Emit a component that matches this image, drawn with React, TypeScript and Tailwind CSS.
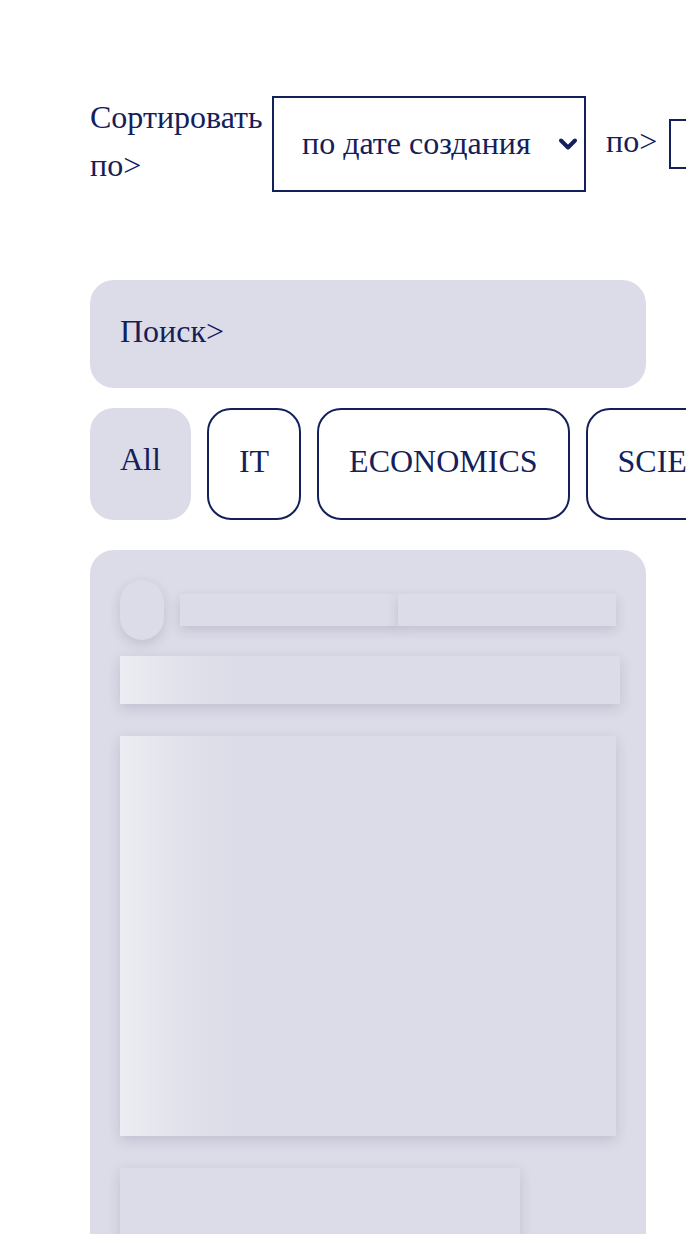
import React, { useState } from 'react';

const CATEGORIES = ['All', 'IT', 'ECONOMICS', 'SCIENCE', 'ART'];

const shade = 'shadow-[0_4px_12px_rgba(40,40,80,0.16)]';

const Chevron: React.FC = () => (
  <svg
    width="20"
    height="14"
    viewBox="0 0 20 14"
    className="pointer-events-none absolute right-[8px] top-1/2 -translate-y-1/2"
  >
    <path d="M3 3.5 L10 10.5 L17 3.5" fill="none" stroke="#13205a" strokeWidth="4" strokeLinecap="round" strokeLinejoin="round" />
  </svg>
);

const SkeletonCard: React.FC = () => (
  <div className="w-[556px] shrink-0 rounded-t-3xl bg-[#dcdce8] px-[30px] pt-[30px] pb-[40px]">
    {/* Author row */}
    <div className="flex items-center gap-4">
      <div className={`h-[60px] w-[44px] rounded-full bg-[#dcdce8] ${shade}`} />
      <div className="flex">
        <div className={`h-[32px] w-[218px] bg-[#dcdce8] ${shade}`} />
        <div className={`h-[32px] w-[218px] bg-[#dcdce8] ${shade}`} />
      </div>
    </div>
    {/* Title */}
    <div
      className={`mt-4 h-[48px] w-[500px] bg-[linear-gradient(90deg,#ececf2_0px,#e2e2ec_60px,#dcdce8_110px)] ${shade}`}
    />
    {/* Cover */}
    <div
      className={`mt-8 h-[400px] w-[496px] bg-[linear-gradient(90deg,#ececf2_0px,#e2e2ec_60px,#dcdce8_110px)] ${shade}`}
    />
    {/* Footer */}
    <div className={`mt-8 h-[100px] w-[400px] bg-[#dcdce8] ${shade}`} />
  </div>
);

export default function App() {
  const [active, setActive] = useState('All');

  return (
    <div
      className="min-h-screen overflow-hidden bg-white pl-[90px] pt-[96px] text-[32px] text-[#13205a]"
      style={{ fontFamily: '"Liberation Serif", "Times New Roman", serif' }}
    >
      {/* Sorting */}
      <div className="flex items-center">
        <span className="-mt-[6px] mr-[10px] w-[172px] shrink-0 leading-[48px]">Сортировать по&gt;</span>
        <div className="relative mr-[20px] shrink-0">
          <select
            defaultValue="created"
            className="block h-[96px] w-[314px] appearance-none border-2 border-[#13205a] bg-white pb-[2px] pl-[28px] pr-10 text-[#13205a] outline-none"
          >
            <option value="created">по дате создания</option>
            <option value="title">по названию</option>
          </select>
          <Chevron />
        </div>
        <span className="-mt-[6px] mr-[12px] shrink-0">по&gt;</span>
        <div className="relative shrink-0">
          <select
            defaultValue="desc"
            className="block h-[50px] w-[240px] appearance-none border-2 border-[#13205a] bg-white pl-[28px] pr-10 text-[#13205a] outline-none"
          >
            <option value="desc">убыванию</option>
            <option value="asc">возрастанию</option>
          </select>
          <Chevron />
        </div>
      </div>

      {/* Search */}
      <input
        placeholder="Поиск>"
        className="mt-[88px] block h-[108px] w-[556px] rounded-3xl bg-[#dcdce8] px-[30px] pb-[6px] text-[#13205a] outline-none placeholder:text-[#13205a]"
      />

      {/* Categories */}
      <div className="mt-[20px] flex gap-4">
        {CATEGORIES.map(c => (
          <button
            key={c}
            onClick={() => setActive(c)}
            className={
              active === c
                ? 'flex h-[112px] shrink-0 items-center rounded-3xl bg-[#dcdce8] px-[30px] pb-[10px]'
                : 'flex h-[112px] shrink-0 items-center rounded-3xl border-2 border-[#13205a] px-[30px] pb-[6px]'
            }
          >
            {c}
          </button>
        ))}
      </div>

      {/* Posts loading */}
      <div className="mt-[30px]">
        <SkeletonCard />
      </div>
    </div>
  );
}
